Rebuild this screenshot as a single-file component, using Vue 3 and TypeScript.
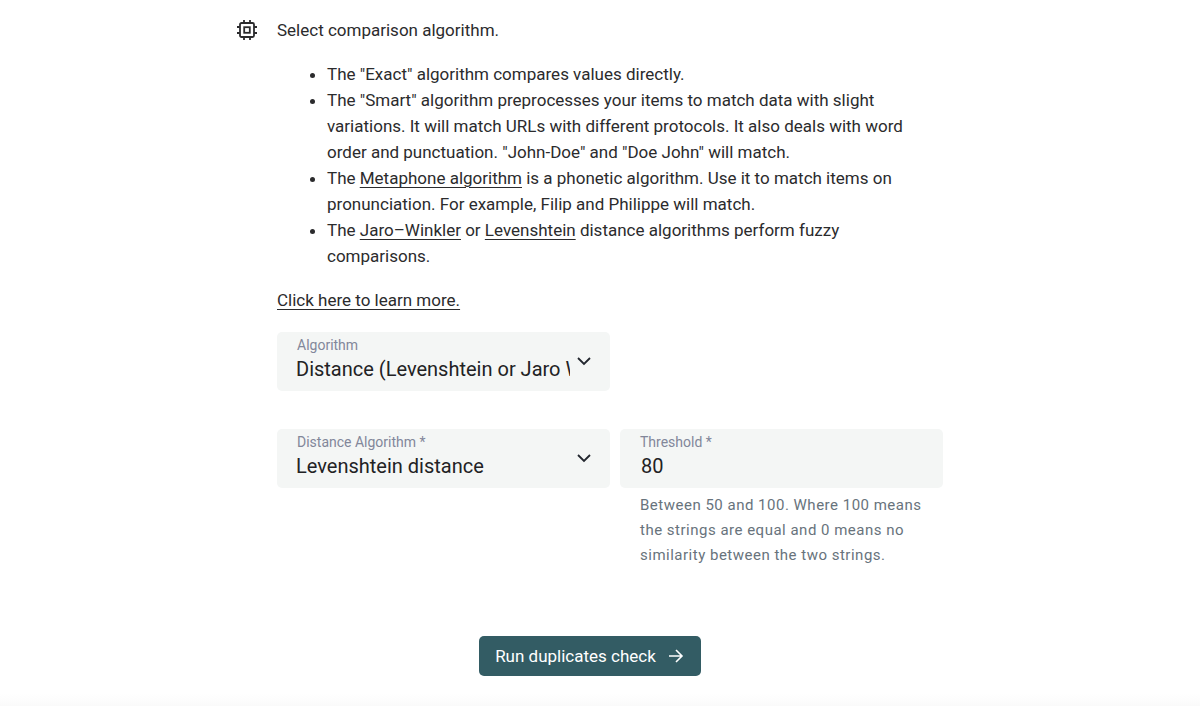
<script setup lang="ts">
import { ref } from 'vue'

const algorithm = ref<string>('distance')
const distanceAlgorithm = ref<string>('levenshtein')
const threshold = ref<string>('80')
</script>

<template>
  <main class="page">
    <form class="step" @submit.prevent>
      <div class="row">
        <svg class="chip" viewBox="0 0 24 24" aria-hidden="true">
          <rect x="5" y="5" width="14" height="14" rx="1.5" />
          <rect x="9.2" y="9.2" width="5.6" height="5.6" />
          <path d="M9 2v3M15 2v3M9 19v3M15 19v3M2 9h3M2 15h3M19 9h3M19 15h3" />
        </svg>
        <div class="content">
          <p class="intro">Select comparison algorithm.</p>
          <ul class="notes">
            <li>The "Exact" algorithm compares values directly.</li>
            <li>
              The "Smart" algorithm preprocesses your items to match data with slight variations.
              It will match URLs with different protocols. It also deals with word order and
              punctuation. "John-Doe" and "Doe John" will match.
            </li>
            <li>
              The <a href="#metaphone">Metaphone algorithm</a> is a phonetic algorithm. Use it to
              match items on pronunciation. For example, Filip and Philippe will match.
            </li>
            <li>
              The <a href="#jaro-winkler">Jaro–Winkler</a> or
              <a href="#levenshtein">Levenshtein</a> distance algorithms perform fuzzy comparisons.
            </li>
          </ul>
          <p class="more"><a href="#learn-more">Click here to learn more.</a></p>

          <div class="fields">
            <div class="field">
              <label for="algorithm">Algorithm</label>
              <select id="algorithm" v-model="algorithm">
                <option value="distance">Distance (Levenshtein or Jaro Winkler)</option>
                <option value="exact">Exact</option>
                <option value="smart">Smart</option>
                <option value="metaphone">Metaphone</option>
              </select>
              <svg class="chevron" viewBox="0 0 16 16" aria-hidden="true"><path d="M2 5l6 6 6-6" /></svg>
            </div>
          </div>

          <div class="fields">
            <div class="field">
              <label for="distance">Distance Algorithm *</label>
              <select id="distance" v-model="distanceAlgorithm" required>
                <option value="levenshtein">Levenshtein distance</option>
                <option value="jaro">Jaro–Winkler distance</option>
              </select>
              <svg class="chevron" viewBox="0 0 16 16" aria-hidden="true"><path d="M2 5l6 6 6-6" /></svg>
            </div>
            <div>
              <div class="field">
                <label for="threshold">Threshold *</label>
                <input id="threshold" v-model="threshold" type="text" inputmode="numeric" required aria-describedby="hint" />
              </div>
              <p id="hint" class="hint">
                Between 50 and 100. Where 100 means the strings are equal and 0 means no similarity
                between the two strings.
              </p>
            </div>
          </div>
        </div>
      </div>

      <button class="run" type="submit">
        Run duplicates check
        <svg class="arrow" viewBox="0 0 16 16" aria-hidden="true"><path d="M1 8h13M8 2l6 6-6 6" /></svg>
      </button>
    </form>
  </main>
</template>

<style>
body {
  margin: 0;
  background: #fff;
}
</style>

<style scoped>
.page {
  box-sizing: border-box;
  min-height: 100vh;
  padding: 17px 20px 30px;
  font-family: Roboto, "Liberation Sans", sans-serif;
  font-size: 17px;
  line-height: 26px;
  color: #2b2b2d;
  background: linear-gradient(to top, #fafafa, #fff 12px);
}
.step {
  box-sizing: border-box;
  display: flex;
  flex-direction: column;
  max-width: 726px;
  margin: 0 auto;
  padding-right: 20px;
}
.row {
  display: flex;
  gap: 18px;
}
.chip {
  flex: none;
  width: 24px;
  height: 24px;
  margin: 1px 0 0 -2px;
  fill: none;
  stroke: currentColor;
  stroke-width: 1.8;
}
.content {
  flex: 1;
  min-width: 0;
}
p {
  margin: 0;
}
a {
  color: inherit;
  text-decoration: underline;
  text-underline-offset: 3px;
  text-decoration-thickness: 1px;
}
.notes {
  margin: 18px 0;
  padding: 0 20px 0 50px;
}
.more {
  margin-bottom: 19px;
}
.fields {
  display: grid;
  grid-template-columns: 333fr 323fr;
  gap: 10px;
}
.fields + .fields {
  margin-top: 38px;
}
.field {
  position: relative;
}
.field label {
  position: absolute;
  top: 3px;
  left: 20px;
  font-size: 14px;
  line-height: 20px;
  color: #82879a;
  pointer-events: none;
}
select,
input {
  display: block;
  box-sizing: border-box;
  width: 100%;
  height: 59px;
  margin: 0;
  padding: 22px 40px 7px 19px;
  border: 0;
  border-radius: 5px;
  background: #f4f6f5;
  color: #222224;
  font-family: inherit;
  font-size: 20px;
  line-height: 30px;
  appearance: none;
}
input {
  padding-left: 21px;
}
.chevron {
  position: absolute;
  top: 21px;
  right: 18px;
  width: 16px;
  height: 16px;
  fill: none;
  stroke: #22262e;
  stroke-width: 1.8;
  pointer-events: none;
}
.hint {
  padding: 5px 20px 0;
  font-size: 15px;
  line-height: 25px;
  letter-spacing: 0.5px;
  color: #68737c;
}
.run {
  display: flex;
  align-items: center;
  gap: 12px;
  align-self: center;
  height: 40px;
  margin-top: 68px;
  padding: 0 17px 0 16px;
  border: 0;
  border-radius: 5px;
  background: #335c64;
  color: #fff;
  font: inherit;
  cursor: pointer;
}
.arrow {
  width: 16px;
  height: 16px;
  fill: none;
  stroke: currentColor;
  stroke-width: 1.6;
}
</style>
